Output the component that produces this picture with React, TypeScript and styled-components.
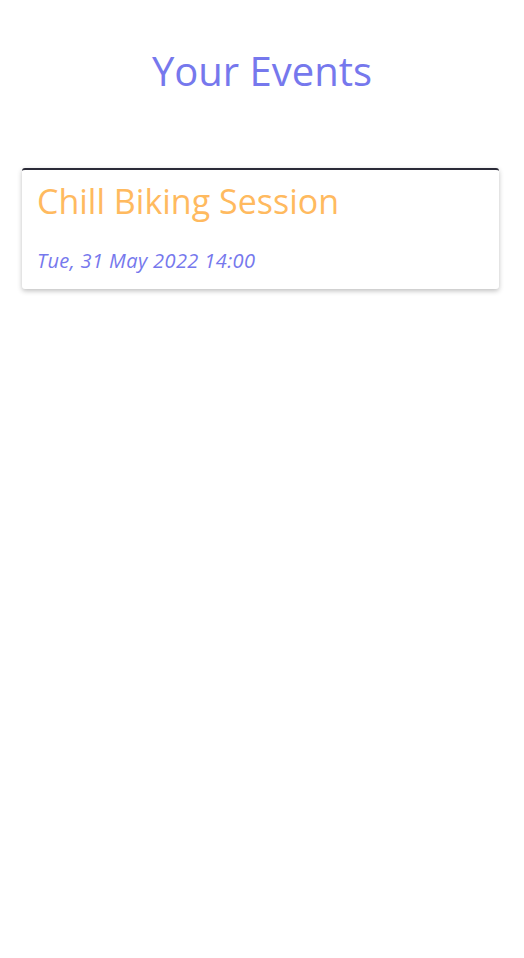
import React from "react";
import styled, { createGlobalStyle } from "styled-components";

const Global = createGlobalStyle`
  html, body { margin: 0; padding: 0; background: #fff; }
  body { font-family: "Open Sans", "DejaVu Sans", sans-serif; }
`;

const Page = styled.main`
  min-height: 100vh;
  box-sizing: border-box;
  display: flex;
  flex-direction: column;
  align-items: center;
  padding-top: 46px;
`;

const Heading = styled.h1`
  margin: 0;
  font-family: "Open Sans", sans-serif;
  font-weight: 400;
  font-size: 40px;
  line-height: 50px;
  color: #7678ed;
`;

const List = styled.section`
  width: 477px;
  margin-top: 72px;
  margin-left: -3px;
  display: flex;
  flex-direction: column;
  gap: 16px;
`;

const Card = styled.article`
  background: #fff;
  border-top: 2px solid #2b2b38;
  border-radius: 3px;
  box-shadow: 0 2px 5px rgba(0, 0, 0, 0.25);
  padding: 10px 15px 15px;
`;

const Title = styled.h2`
  margin: 0;
  font-family: "Open Sans", sans-serif;
  font-weight: 400;
  font-size: 34px;
  line-height: 42px;
  color: #ffba5f;
`;

const Date = styled.p`
  margin: 26px 0 0;
  font-family: "Open Sans", sans-serif;
  font-style: italic;
  font-size: 20px;
  line-height: 26px;
  letter-spacing: 0.4px;
  color: #7678ed;
`;

export default function App() {
  return (
    <>
      <Global />
      <Page>
        <Heading>Your Events</Heading>
        <List>
          <Card>
            <Title>Chill Biking Session</Title>
            <Date>Tue, 31 May 2022 14:00</Date>
          </Card>
        </List>
      </Page>
    </>
  );
}
